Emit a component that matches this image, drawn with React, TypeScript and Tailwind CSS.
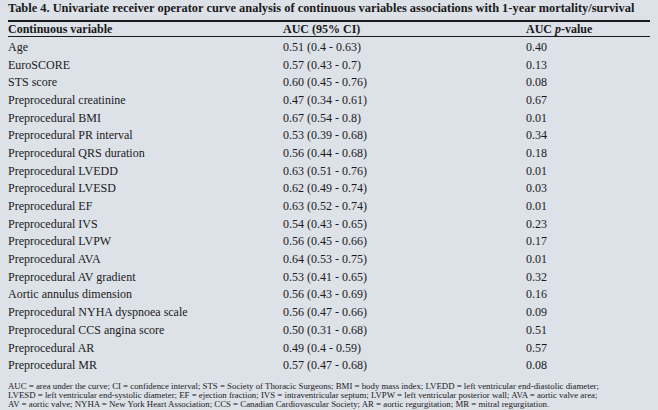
import React from "react";

const rows: [string, string, string][] = [
  ["Age", "0.51 (0.4 - 0.63)", "0.40"],
  ["EuroSCORE", "0.57 (0.43 - 0.7)", "0.13"],
  ["STS score", "0.60 (0.45 - 0.76)", "0.08"],
  ["Preprocedural creatinine", "0.47 (0.34 - 0.61)", "0.67"],
  ["Preprocedural BMI", "0.67 (0.54 - 0.8)", "0.01"],
  ["Preprocedural PR interval", "0.53 (0.39 - 0.68)", "0.34"],
  ["Preprocedural QRS duration", "0.56 (0.44 - 0.68)", "0.18"],
  ["Preprocedural LVEDD", "0.63 (0.51 - 0.76)", "0.01"],
  ["Preprocedural LVESD", "0.62 (0.49 - 0.74)", "0.03"],
  ["Preprocedural EF", "0.63 (0.52 - 0.74)", "0.01"],
  ["Preprocedural IVS", "0.54 (0.43 - 0.65)", "0.23"],
  ["Preprocedural LVPW", "0.56 (0.45 - 0.66)", "0.17"],
  ["Preprocedural AVA", "0.64 (0.53 - 0.75)", "0.01"],
  ["Preprocedural AV gradient", "0.53 (0.41 - 0.65)", "0.32"],
  ["Aortic annulus dimension", "0.56 (0.43 - 0.69)", "0.16"],
  ["Preprocedural NYHA dyspnoea scale", "0.56 (0.47 - 0.66)", "0.09"],
  ["Preprocedural CCS angina score", "0.50 (0.31 - 0.68)", "0.51"],
  ["Preprocedural AR", "0.49 (0.4 - 0.59)", "0.57"],
  ["Preprocedural MR", "0.57 (0.47 - 0.68)", "0.08"],
];

export default function App() {
  return (
    <div
      className="w-[658px] h-[410px] bg-[#dde1e8] text-[#1a1a1a] overflow-hidden px-[8px]"
      style={{ fontFamily: '"Liberation Serif", "DejaVu Serif", serif' }}
    >
      <div className="pt-[1px] h-[20px] text-[12.4px] leading-[14px] font-bold whitespace-nowrap">
        Table 4. Univariate receiver operator curve analysis of continuous variables associations with 1-year mortality/survival
      </div>
      <div className="h-[2px] bg-[#1a1a1a]" />
      <div className="flex h-[14px] items-center text-[12px] leading-[14px] font-bold">
        <div className="w-[275px]">Continuous variable</div>
        <div className="w-[243px]">AUC (95% CI)</div>
        <div>
          AUC <span className="italic">p</span>-value
        </div>
      </div>
      <div className="h-[1px] bg-[#1a1a1a] mb-[1px]" />
      <div className="flex flex-col">
        {rows.map((r) => (
          <div key={r[0]} className="flex h-[17.7px] items-center text-[12px] leading-[14px]">
            <div className="w-[275px]">{r[0]}</div>
            <div className="w-[243px]">{r[1]}</div>
            <div>{r[2]}</div>
          </div>
        ))}
      </div>
      <div className="mt-[8px] text-[8.8px] leading-[9px]">
        <div className="whitespace-nowrap">
          AUC = area under the curve; CI = confidence interval; STS = Society of Thoracic Surgeons; BMI = body mass index; LVEDD = left ventricular end-diastolic diameter;
        </div>
        <div className="whitespace-nowrap">
          LVESD = left ventricular end-systolic diameter; EF = ejection fraction; IVS = intraventricular septum; LVPW = left ventricular posterior wall; AVA = aortic valve area;
        </div>
        <div className="whitespace-nowrap">
          AV = aortic valve; NYHA = New York Heart Association; CCS = Canadian Cardiovascular Society; AR = aortic regurgitation; MR = mitral regurgitation.
        </div>
      </div>
    </div>
  );
}
